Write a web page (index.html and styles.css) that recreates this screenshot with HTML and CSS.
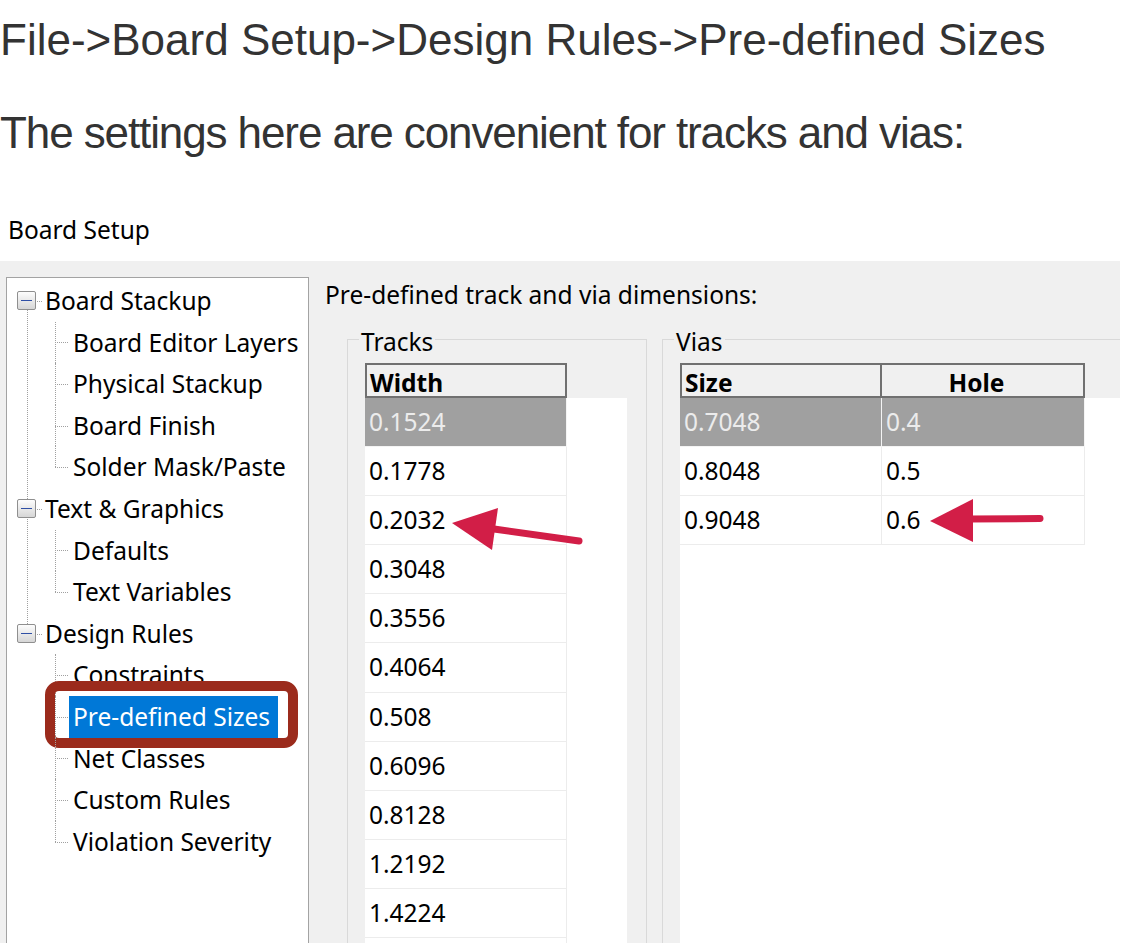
FILE: index.html
```html
<!DOCTYPE html>
<html lang="en">
<head>
<meta charset="utf-8">
<title>Board Setup - Pre-defined Sizes</title>
<link rel="stylesheet" href="styles.css">
</head>
<body>
<main class="page">
  <p class="lead">File-&gt;Board Setup-&gt;Design Rules-&gt;Pre-defined Sizes</p>
  <p class="lead lead-2">The settings here are convenient for tracks and vias:</p>

  <section class="dialog">
    <div class="dialog-title">Board Setup</div>
    <div class="dialog-body">
      <nav class="tree">
        <div class="group">
          <div class="node parent"><span class="expander"></span><span class="label">Board Stackup</span></div>
          <div class="children">
            <div class="node child"><span class="label">Board Editor Layers</span></div>
            <div class="node child"><span class="label">Physical Stackup</span></div>
            <div class="node child"><span class="label">Board Finish</span></div>
            <div class="node child"><span class="label">Solder Mask/Paste</span></div>
          </div>
        </div>
        <div class="group">
          <div class="node parent"><span class="expander"></span><span class="label">Text &amp; Graphics</span></div>
          <div class="children">
            <div class="node child"><span class="label">Defaults</span></div>
            <div class="node child"><span class="label">Text Variables</span></div>
          </div>
        </div>
        <div class="group">
          <div class="node parent"><span class="expander"></span><span class="label">Design Rules</span></div>
          <div class="children">
            <div class="node child"><span class="label">Constraints</span></div>
            <div class="node child"><span class="label selected">Pre-defined Sizes</span></div>
            <div class="node child"><span class="label">Net Classes</span></div>
            <div class="node child"><span class="label">Custom Rules</span></div>
            <div class="node child"><span class="label">Violation Severity</span></div>
          </div>
        </div>
      </nav>

      <div class="content">
        <div class="content-title">Pre-defined track and via dimensions:</div>
        <div class="groups">
          <fieldset class="box box-tracks">
            <legend>Tracks</legend>
            <div class="grid grid-tracks">
              <div class="grid-head">
                <div class="hcell">Width</div>
              </div>
              <div class="grid-body">
                <div class="row selected"><div class="cell">0.1524</div></div>
                <div class="row"><div class="cell">0.1778</div></div>
                <div class="row"><div class="cell">0.2032</div></div>
                <div class="row"><div class="cell">0.3048</div></div>
                <div class="row"><div class="cell">0.3556</div></div>
                <div class="row"><div class="cell">0.4064</div></div>
                <div class="row"><div class="cell">0.508</div></div>
                <div class="row"><div class="cell">0.6096</div></div>
                <div class="row"><div class="cell">0.8128</div></div>
                <div class="row"><div class="cell">1.2192</div></div>
                <div class="row"><div class="cell">1.4224</div></div>
                <div class="row"><div class="cell"></div></div>
              </div>
            </div>
          </fieldset>

          <fieldset class="box box-vias">
            <legend>Vias</legend>
            <div class="grid grid-vias">
              <div class="grid-head">
                <div class="hcell">Size</div>
                <div class="hcell hcell-center">Hole</div>
              </div>
              <div class="grid-body">
                <div class="row selected"><div class="cell">0.7048</div><div class="cell cell-wide">0.4</div></div>
                <div class="row"><div class="cell">0.8048</div><div class="cell cell-wide">0.5</div></div>
                <div class="row"><div class="cell">0.9048</div><div class="cell cell-wide">0.6</div></div>
              </div>
            </div>
          </fieldset>
        </div>
      </div>
    </div>
  </section>

  <svg class="arrows" width="1135" height="943" viewBox="0 0 1135 943" aria-hidden="true">
    <line x1="494" y1="529" x2="579" y2="541" stroke="#d21e47" stroke-width="7" stroke-linecap="round"/>
    <polygon points="452,523 498,508 492,550" fill="#d21e47"/>
    <line x1="968" y1="519" x2="1040" y2="518.5" stroke="#d21e47" stroke-width="7" stroke-linecap="round"/>
    <polygon points="930,521 973,499 973,542" fill="#d21e47"/>
  </svg>
</main>
</body>
</html>
```

FILE: styles.css
```css
html, body {
  margin: 0;
  padding: 0;
  background: #fff;
  overflow: hidden;
}

.page {
  position: relative;
  width: 1135px;
  height: 943px;
  overflow: hidden;
}

.lead {
  margin: 15px 0 0;
  font-family: "Liberation Sans", Arial, sans-serif;
  font-size: 44px;
  line-height: 50px;
  color: #333;
  white-space: nowrap;
}

.lead-2 {
  margin-top: 43px;
  letter-spacing: -1.1px;
}

.dialog {
  margin-top: 42px;
  width: 1120px;
  font-family: "Noto Sans", sans-serif;
  font-size: 24.5px;
  color: #000;
}

.dialog-title {
  padding: 13px 0 14px 8px;
  line-height: 34px;
  background: #fff;
}

.dialog-body {
  display: flex;
  height: 682px;
  box-sizing: border-box;
  padding: 16px 0 0 6px;
  background: #f0f0f0;
  overflow: hidden;
}

/* ---------- tree ---------- */
.tree {
  flex: none;
  width: 303px;
  height: 720px;
  box-sizing: border-box;
  border: 1px solid #a3a3a3;
  background: #fff;
  padding-top: 2px;
}

.group {
  position: relative;
}

.group:not(:last-child)::before {
  content: "";
  position: absolute;
  left: 20px;
  top: 20.8px;
  bottom: -20.8px;
  border-left: 1px dotted #a0a0a0;
}

.node {
  position: relative;
  display: flex;
  align-items: center;
  height: 41.6px;
  white-space: nowrap;
}

.parent {
  padding-left: 10px;
}

.parent::after {
  content: "";
  position: absolute;
  left: 30px;
  top: 50%;
  width: 5px;
  border-top: 1px dotted #a0a0a0;
}

.expander {
  position: relative;
  z-index: 1;
  flex: none;
  width: 19px;
  height: 19px;
  box-sizing: border-box;
  border: 1px solid #8f8f8f;
  border-radius: 2px;
  background: linear-gradient(#fdfdfd, #d6d6d6);
  margin-right: 9px;
}

.expander::before {
  content: "";
  position: absolute;
  left: 3px;
  right: 3px;
  top: 7.5px;
  height: 1.5px;
  background: #2f4fa5;
}

.children {
  position: relative;
}

.child {
  padding-left: 62px;
}

.child::before {
  content: "";
  position: absolute;
  left: 48px;
  top: 50%;
  width: 13px;
  border-top: 1px dotted #a0a0a0;
}

.child::after {
  content: "";
  position: absolute;
  left: 48px;
  top: 0;
  bottom: 0;
  border-left: 1px dotted #a0a0a0;
}

.child:last-child::after {
  bottom: 50%;
}

.child .label {
  padding: 0 4px;
  line-height: 41.6px;
}

.child .label.selected {
  position: relative;
  padding-right: 8px;
  background: #0078d7;
  color: #fff;
}

.label.selected::after {
  content: "";
  position: absolute;
  left: -24px;
  right: -20px;
  top: -15px;
  bottom: -10px;
  border: 10.5px solid #9b2b1c;
  border-radius: 14px;
}

/* ---------- right content ---------- */
.content {
  flex: none;
  padding: 1px 0 0 16px;
}

.content-title {
  line-height: 34px;
  white-space: nowrap;
}

.groups {
  display: flex;
  margin: 12px 0 0 22px;
}

.box {
  margin: 0;
  padding: 0;
  min-width: 0;
  height: 660px;
  box-sizing: border-box;
  border: 1px solid #d9d9d9;
}

.box legend {
  margin-left: 11px;
  padding: 6px 2px 0;
  line-height: 24px;
}

.box-tracks {
  flex: none;
  width: 300px;
}

.box-vias {
  flex: none;
  width: 520px;
  margin-left: 15px;
}

.grid {
  margin: 9px 0 0 17px;
}

.grid-tracks {
  width: 262px;
}

.grid-vias {
  width: 500px;
}

.grid-head {
  display: flex;
  height: 35px;
}

.hcell {
  flex: none;
  width: 202px;
  box-sizing: border-box;
  border: 2px solid #707070;
  background: #f0f0f0;
  font-weight: 700;
  line-height: 27px;
  padding: 4px 0 0 3px;
}

.hcell-center {
  width: 203px;
  border-left: 0;
  text-align: center;
  padding: 4px 12px 0 0;
}

.grid-body {
  height: 700px;
  background: #fff;
}

.row {
  display: flex;
  height: 49.1px;
}

.cell {
  flex: none;
  width: 202px;
  box-sizing: border-box;
  border-right: 1px solid #ececec;
  border-bottom: 1px solid #ececec;
  line-height: 48px;
  padding-left: 4px;
}

.cell-wide {
  width: 203px;
}

.row.selected .cell {
  background: #a0a0a0;
  color: #ececec;
  border-color: #f4f4f4;
}

/* ---------- annotation arrows ---------- */
.arrows {
  position: absolute;
  left: 0;
  top: 0;
  pointer-events: none;
}
```
